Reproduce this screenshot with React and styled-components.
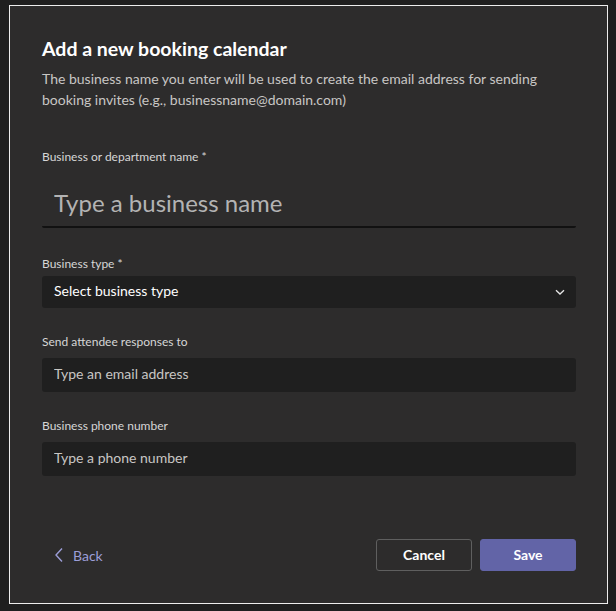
import React from "react";
import styled, { createGlobalStyle } from "styled-components";

const GlobalStyle = createGlobalStyle`
  html, body {
    margin: 0;
    padding: 0;
    background: #1f1f1f;
  }
  * {
    box-sizing: border-box;
  }
`;

export default function App() {
  return (
    <>
      <GlobalStyle />
      <Page>
        <Dialog>
          <Title>Add a new booking calendar</Title>
          <Description>
            The business name you enter will be used to create the email address for sending
            booking invites (e.g., businessname@domain.com)
          </Description>

          <Field $top={39}>
            <Label>Business or department name *</Label>
            <BigInput placeholder="Type a business name" />
          </Field>

          <Field $top={28}>
            <Label $gap={4}>Business type *</Label>
            <Select>
              <span>Select business type</span>
              <svg width="12" height="12" viewBox="0 0 12 12">
                <path d="M2 4.2 L6 8 L10 4.2" fill="none" stroke="#e6e6e6" strokeWidth="1.3" />
              </svg>
            </Select>
          </Field>

          <Field $top={26}>
            <Label $gap={8}>Send attendee responses to</Label>
            <TextInput placeholder="Type an email address" />
          </Field>

          <Field $top={26}>
            <Label $gap={8}>Business phone number</Label>
            <TextInput placeholder="Type a phone number" />
          </Field>

          <Footer>
            <BackLink>
              <svg width="10" height="16" viewBox="0 0 10 16">
                <path d="M8 1.5 L2 8 L8 14.5" fill="none" stroke="#9c9ed8" strokeWidth="1.4" />
              </svg>
              Back
            </BackLink>
            <Actions>
              <Button>Cancel</Button>
              <Button $primary>Save</Button>
            </Actions>
          </Footer>
        </Dialog>
      </Page>
    </>
  );
}

const Page = styled.div`
  padding: 5px 8px 8px 9px;
  font-family: "Lato", "Noto Sans", sans-serif;
`;

const Dialog = styled.div`
  width: 599px;
  height: 599px;
  background: #2d2c2c;
  border: 1px solid #ededed;
  padding: 31px 31px 32px 32px;
  display: flex;
  flex-direction: column;
`;

const Title = styled.h1`
  margin: 0;
  font-size: 19.5px;
  line-height: 24px;
  font-weight: 700;
  color: #ffffff;
`;

const Description = styled.p`
  margin: 7px 0 0;
  font-size: 14px;
  line-height: 21px;
  color: #c8c6c4;
`;

const Field = styled.div`
  margin-top: ${(p) => p.$top}px;
  display: flex;
  flex-direction: column;
`;

const Label = styled.label`
  font-size: 12px;
  line-height: 16px;
  color: #d6d6d6;
  margin-bottom: ${(p) => p.$gap ?? 17}px;
`;

const BigInput = styled.input`
  height: 46px;
  border: none;
  border-bottom: 2px solid #111111;
  border-radius: 3px 3px 2px 2px;
  background: transparent;
  padding: 0 12px 4px;
  font-family: inherit;
  font-size: 24px;
  color: #ffffff;
  outline: none;
  &::placeholder {
    color: #b3b3b3;
  }
`;

const Select = styled.div`
  height: 32px;
  background: #1f1f1f;
  border-radius: 3px;
  padding: 0 10px 3px 12px;
  display: flex;
  align-items: center;
  justify-content: space-between;
  font-size: 14px;
  color: #ffffff;

  svg {
    margin-top: 3px;
  }
`;

const TextInput = styled.input`
  height: 34px;
  border: none;
  border-radius: 3px;
  background: #1f1f1f;
  padding: 0 12px 3px;
  font-family: inherit;
  font-size: 14px;
  color: #ffffff;
  outline: none;
  &::placeholder {
    color: #c8c6c4;
  }
`;

const Footer = styled.div`
  margin-top: auto;
  display: flex;
  align-items: center;
  justify-content: space-between;
`;

const BackLink = styled.a`
  display: flex;
  align-items: center;
  gap: 9px;
  padding-left: 12px;
  font-size: 14px;
  color: #9c9ed8;
  cursor: pointer;
`;

const Actions = styled.div`
  display: flex;
  gap: 8px;
`;

const Button = styled.button`
  width: 96px;
  height: 32px;
  border-radius: 3px;
  font-family: inherit;
  font-size: 14px;
  font-weight: 700;
  color: #ffffff;
  cursor: pointer;
  padding: 0 0 2px;
  background: ${(p) => (p.$primary ? "#6264a7" : "transparent")};
  border: 1px solid ${(p) => (p.$primary ? "#6264a7" : "#5f5f5f")};
`;
